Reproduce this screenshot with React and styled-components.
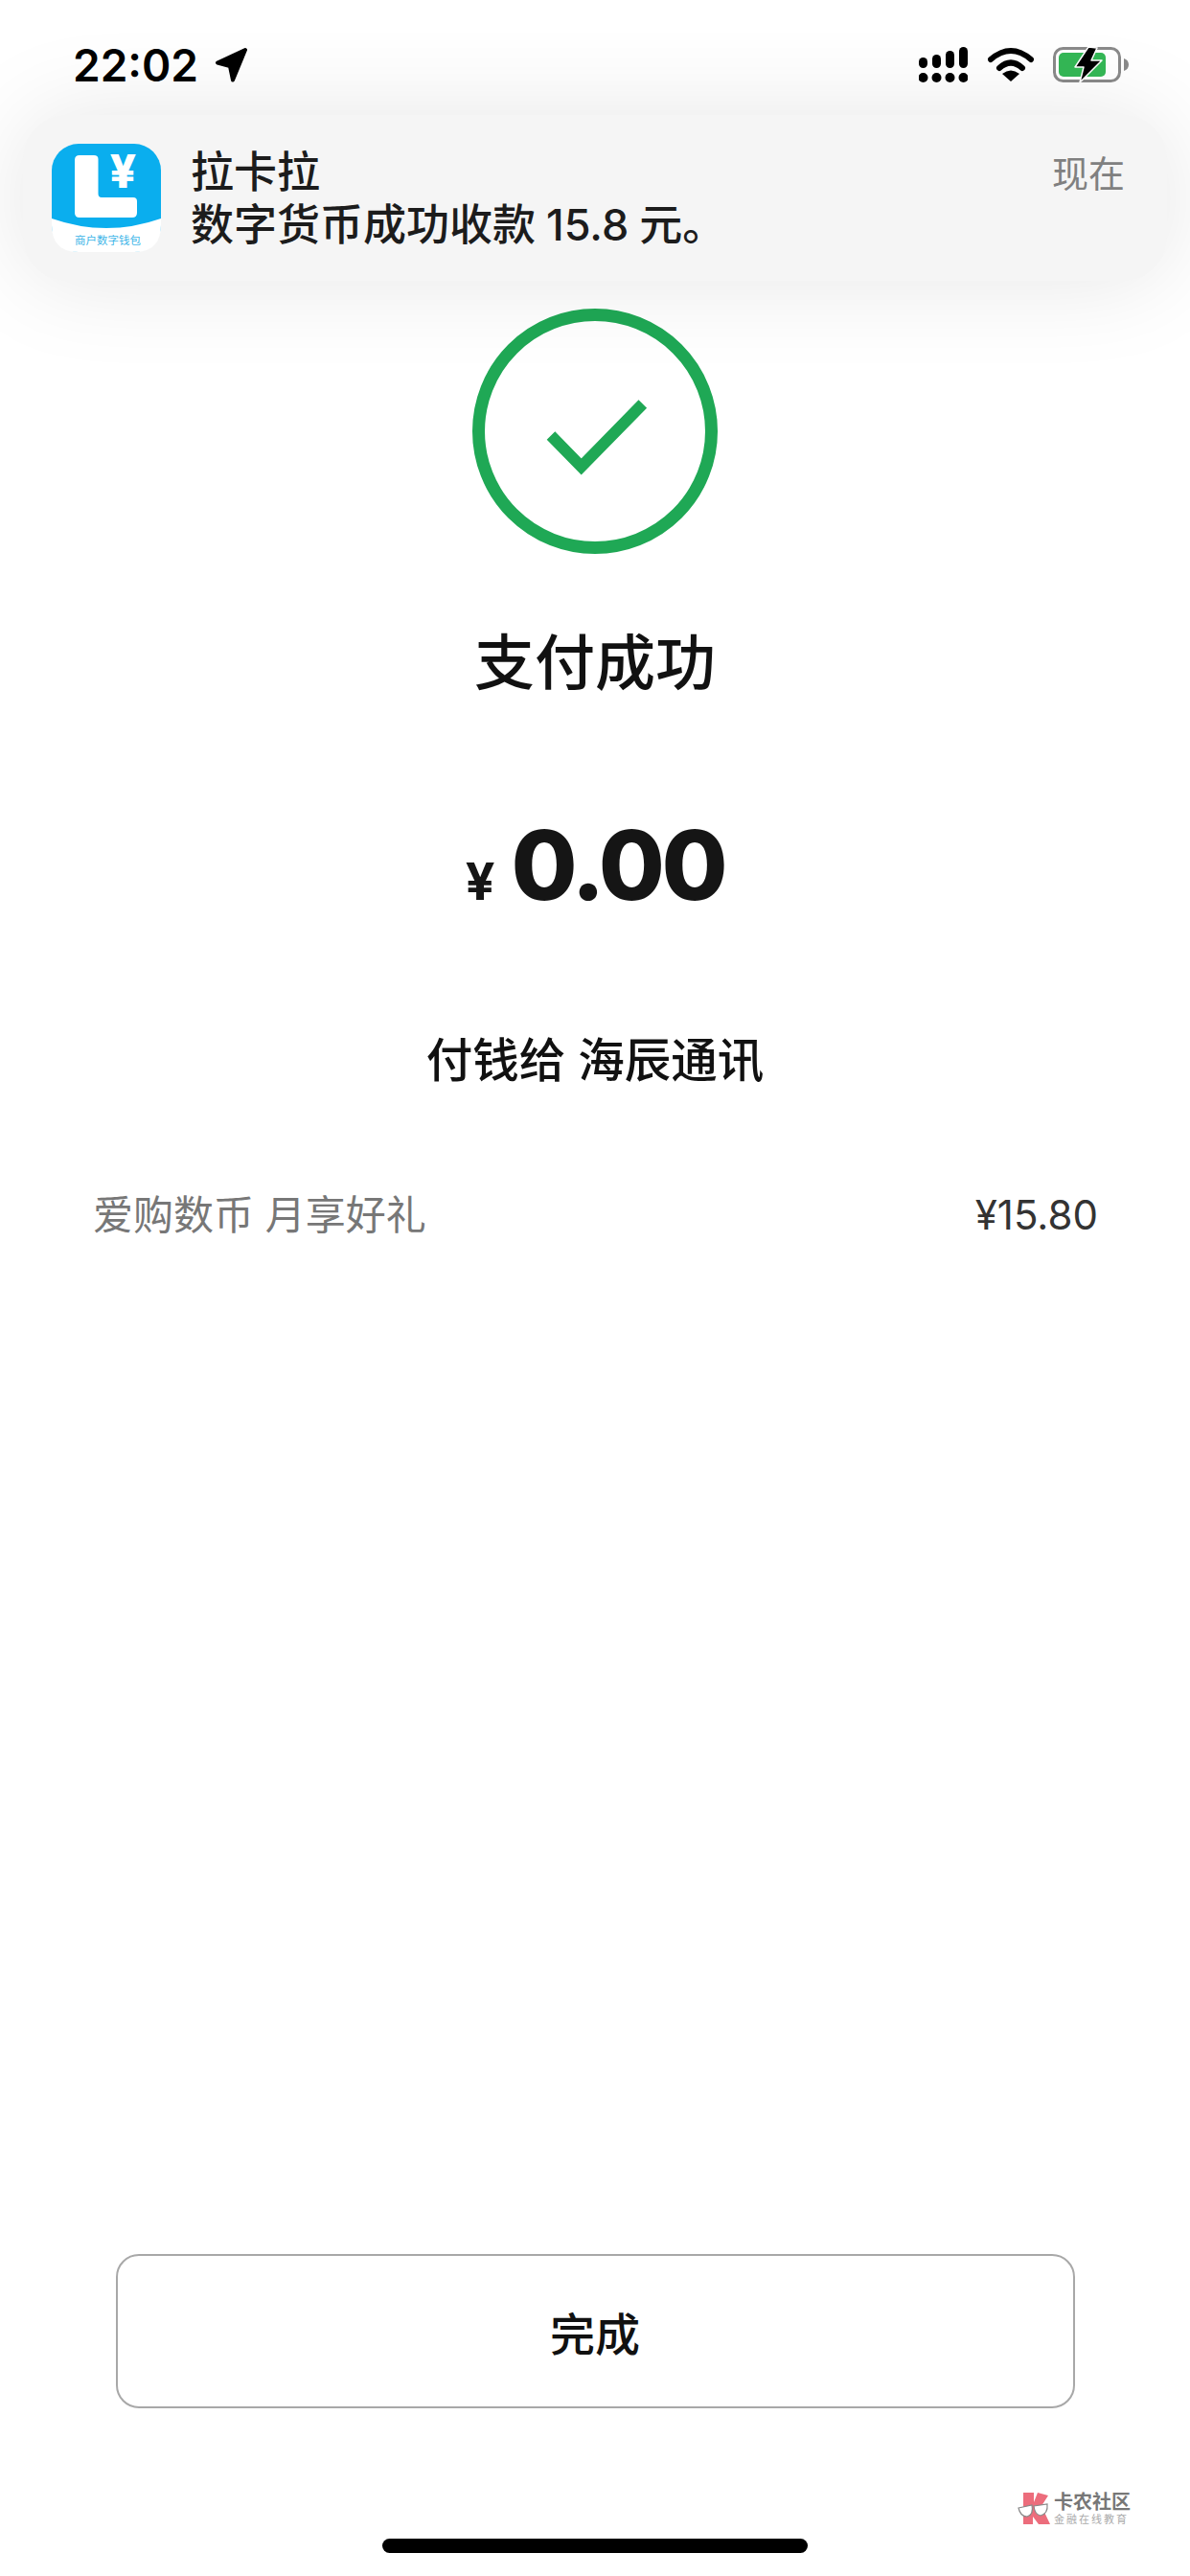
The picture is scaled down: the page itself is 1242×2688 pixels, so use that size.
import React from 'react';
import styled, { createGlobalStyle } from 'styled-components';

const CJK = `Inter, "Noto Sans CJK SC", sans-serif`;

const GlobalStyle = createGlobalStyle`
  html, body {
    margin: 0;
    padding: 0;
    background: #fff;
  }
  body {
    font-family: ${CJK};
  }
`;

const Page = styled.div`
  position: relative;
  width: 1242px;
  height: 2688px;
  display: flex;
  flex-direction: column;
  align-items: center;
  overflow: hidden;
  background: #fff;
`;

const StatusBar = styled.div`
  align-self: stretch;
  height: 37px;
  margin-top: 49px;
  padding: 0 63px 0 76px;
  display: flex;
  align-items: center;
  justify-content: space-between;
`;

const Clock = styled.div`
  display: flex;
  align-items: center;
  gap: 17px;
  font-size: 46px;
  font-weight: 600;
  color: #000;
`;

const StatusIcons = styled.div`
  display: flex;
  align-items: center;
  gap: 20.5px;
`;

const Banner = styled.div`
  position: absolute;
  top: 120px;
  left: 24px;
  width: 1194px;
  height: 173px;
  box-sizing: border-box;
  padding: 30px 44px 0 30px;
  display: flex;
  align-items: flex-start;
  background: #f5f5f5;
  border-radius: 46px;
  box-shadow: 0 0 100px rgba(0, 0, 0, 0.1);
`;

const BannerText = styled.div`
  flex: 1;
  padding-left: 31px;
  padding-top: 2px;
  color: #1c1c1c;
  font-size: 45px;
  line-height: 55px;
  font-weight: 500;
  word-spacing: -1px;
`;

const BannerTime = styled.div`
  font-size: 38px;
  line-height: 62px;
  color: #808080;
`;

const Content = styled.div`
  margin-top: 236px;
  display: flex;
  flex-direction: column;
  align-items: center;
`;

const PayTitle = styled.div`
  margin-top: 70px;
  font-size: 63px;
  line-height: 86px;
  font-weight: 500;
  color: #111;
`;

const Amount = styled.div`
  margin-top: 106px;
  display: flex;
  align-items: baseline;
  gap: 17px;
  color: #151515;
  line-height: 126px;
`;

const Currency = styled.span`
  font-size: 54px;
  font-weight: 700;
`;

const AmountValue = styled.span`
  font-size: 100px;
  font-weight: 800;
  letter-spacing: -3.5px;
`;

const Payee = styled.div`
  margin-top: 89px;
  font-size: 48.5px;
  line-height: 70px;
  font-weight: 500;
  color: #111;
`;

const PromoRow = styled.div`
  box-sizing: border-box;
  width: 1050px;
  margin-top: 96px;
  padding-left: 1px;
  display: flex;
  align-items: center;
  justify-content: space-between;
  line-height: 60px;
`;

const PromoLabel = styled.span`
  font-size: 42px;
  color: #777;
`;

const PromoPrice = styled.span`
  font-size: 42px;
  color: #333;
`;

const DoneButton = styled.button`
  width: 1001px;
  height: 161px;
  margin-top: auto;
  margin-bottom: 175px;
  background: #fff;
  border: 2px solid #a8a8a8;
  border-radius: 24px;
  font-family: ${CJK};
  font-size: 47px;
  font-weight: 500;
  color: #111;
`;

const HomeIndicator = styled.div`
  position: absolute;
  bottom: 24px;
  left: 399px;
  width: 444px;
  height: 15px;
  border-radius: 8px;
  background: #000;
`;

const Watermark = styled.div`
  position: absolute;
  top: 2600px;
  left: 1062px;
  display: flex;
  align-items: center;
  gap: 2px;
`;

const WatermarkText = styled.div`
  display: flex;
  flex-direction: column;
`;

const WatermarkName = styled.span`
  font-size: 20px;
  line-height: 22px;
  font-weight: 700;
  color: #777;
`;

const WatermarkSlogan = styled.span`
  font-size: 11px;
  line-height: 14px;
  letter-spacing: 2px;
  color: #aaa;
`;

function LocationArrow() {
  return (
    <svg width="35" height="37" viewBox="0 0 35 37">
      <path d="M32 3 L3 16.5 L16 20 L19 34.5 Z" fill="#000" stroke="#000" strokeWidth="4" strokeLinejoin="round" />
    </svg>
  );
}

function SignalIcon() {
  return (
    <svg width="51" height="37" viewBox="0 0 51 37">
      <rect x="0" y="11" width="9" height="11" rx="4.5" />
      <rect x="14" y="8" width="9" height="14" rx="4.5" />
      <rect x="28" y="4" width="9" height="18" rx="4.5" />
      <rect x="42" y="0" width="9" height="22" rx="4.5" />
      <circle cx="4.5" cy="32" r="5" />
      <circle cx="18.5" cy="32" r="5" />
      <circle cx="32.5" cy="32" r="5" />
      <circle cx="46.5" cy="32" r="5" />
    </svg>
  );
}

function WifiIcon() {
  return (
    <svg width="48" height="37" viewBox="0 0 48 37">
      <path d="M3 13 Q24 -5 45 13" fill="none" stroke="#000" strokeWidth="6" strokeLinecap="round" />
      <path d="M12 22 Q24 11 36 22" fill="none" stroke="#000" strokeWidth="6" strokeLinecap="round" />
      <path d="M24 36 L15 28 Q24 21 33 28 Z" fill="#000" />
    </svg>
  );
}

function BatteryIcon() {
  return (
    <svg width="80" height="37" viewBox="0 0 80 37">
      <rect x="1.5" y="1.5" width="68" height="34" rx="9" fill="none" stroke="#8a8a8a" strokeWidth="3" />
      <rect x="6" y="6" width="49" height="25" rx="5" fill="#34b856" />
      <path d="M74 12 C77 13 79 15 79 18.5 C79 22 77 24 74 25 Z" fill="#8a8a8a" />
      <path d="M37 0 L23 21 L32 21 L28 37 L51 14 L40 14 L46 1 Z" fill="#000" stroke="#fff" strokeWidth="1.5" strokeLinejoin="round" />
    </svg>
  );
}

function AppIcon() {
  return (
    <svg width="114" height="113" viewBox="0 0 114 113" style={{ flexShrink: 0 }}>
      <rect width="114" height="113" rx="28" fill="#0aaeee" />
      <path d="M0 78 Q57 98 114 78 V85 Q114 113 86 113 H28 Q0 113 0 85 Z" fill="#fff" />
      <path d="M29 12 H44 Q48.5 12 48.5 16 V52 Q48.5 56 52 56 H85 Q89 56 89 60 V72 Q89 77 84 77 H29 Q24 77 24 72 V17 Q24 12 29 12 Z" fill="#fff" />
      <text x="74.5" y="46" textAnchor="middle" fontSize="48" fontWeight="800" fill="#fff" fontFamily="Inter, sans-serif">¥</text>
      <text x="58.5" y="105" textAnchor="middle" fontSize="11.5" fill="#3fb6e8" fontFamily='"Noto Sans CJK SC", sans-serif'>商户数字钱包</text>
    </svg>
  );
}

function SuccessIcon() {
  return (
    <svg width="256" height="256" viewBox="0 0 256 256">
      <circle cx="128" cy="128" r="121.5" fill="none" stroke="#1fa855" strokeWidth="13" />
      <path d="M82 132.5 L113.7 165 L177.8 99.5" fill="none" stroke="#1fa855" strokeWidth="12" />
    </svg>
  );
}

function WatermarkLogo() {
  return (
    <svg width="36" height="36" viewBox="0 0 36 36">
      <path d="M6 1 H17 V11 L21 1 L32 4 L25 15 L34 34 L22 34 L16 26 V34 H6 Z" fill="#ec6d7c" />
      <path d="M1 17 L15 14 Q17 24 10 26 Q3 26 1 17 Z" fill="#fff" stroke="#888" strokeWidth="1.2" />
      <path d="M17 15 L31 13 Q32 23 24 25 Q18 24 17 15 Z" fill="#fff" stroke="#888" strokeWidth="1.2" />
    </svg>
  );
}

export default function App() {
  return (
    <>
      <GlobalStyle />
      <Page>
        <StatusBar>
          <Clock>
            22:02
            <LocationArrow />
          </Clock>
          <StatusIcons>
            <SignalIcon />
            <WifiIcon />
            <BatteryIcon />
          </StatusIcons>
        </StatusBar>

        <Banner>
          <AppIcon />
          <BannerText>
            <div>拉卡拉</div>
            <div>数字货币成功收款 15.8 元。</div>
          </BannerText>
          <BannerTime>现在</BannerTime>
        </Banner>

        <Content>
          <SuccessIcon />
          <PayTitle>支付成功</PayTitle>
          <Amount>
            <Currency>¥</Currency>
            <AmountValue>0.00</AmountValue>
          </Amount>
          <Payee>付钱给 海辰通讯</Payee>
          <PromoRow>
            <PromoLabel>爱购数币 月享好礼</PromoLabel>
            <PromoPrice>¥15.80</PromoPrice>
          </PromoRow>
        </Content>

        <DoneButton>完成</DoneButton>
        <HomeIndicator />

        <Watermark>
          <WatermarkLogo />
          <WatermarkText>
            <WatermarkName>卡农社区</WatermarkName>
            <WatermarkSlogan>金融在线教育</WatermarkSlogan>
          </WatermarkText>
        </Watermark>
      </Page>
    </>
  );
}
